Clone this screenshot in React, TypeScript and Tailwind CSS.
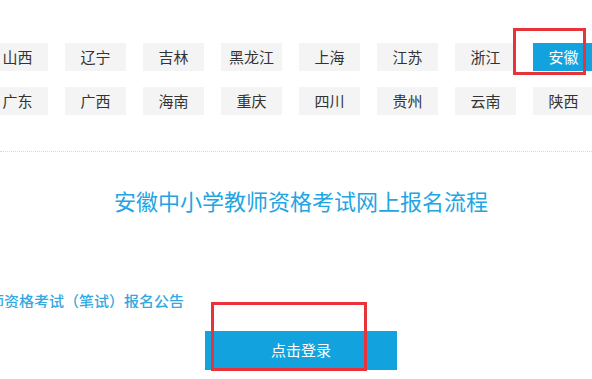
import React from "react";

const ROWS = [
  ["山西", "辽宁", "吉林", "黑龙江", "上海", "江苏", "浙江", "安徽"],
  ["广东", "广西", "海南", "重庆", "四川", "贵州", "云南", "陕西"],
];

const CN = { fontFamily: '"Noto Sans CJK SC", "Noto Sans", sans-serif' };

export default function App() {
  return (
    <div className="relative h-[379px] w-[592px] overflow-hidden bg-white" style={CN}>
      {/* province picker */}
      <div className="overflow-hidden pt-[43px]">
        <div className="-ml-[13px] flex w-[607px] flex-wrap gap-x-[17px] gap-y-[16px]">
          {ROWS.flat().map((name) => {
            const active = name === "安徽";
            return (
              <div
                key={name}
                className={
                  active
                    ? "flex h-[28px] w-[61px] items-center justify-center bg-[#12a3df] text-[15px] text-white"
                    : "flex h-[28px] w-[61px] items-center justify-center bg-[#f4f4f4] text-[15px] text-[#333]"
                }
              >
                {name}
              </div>
            );
          })}
        </div>
      </div>

      <div className="mt-[36px] border-t border-dotted border-[#d9d9d9]" />

      <h1 className="mt-[37px] pl-[10px] text-center text-[22px] leading-[22px] font-normal text-[#22a5e2]">
        安徽中小学教师资格考试网上报名流程
      </h1>

      <div className="mt-[82px] overflow-hidden">
        <p className="-ml-[11px] text-[15px] leading-[15px] font-medium whitespace-nowrap text-[#35a8e1]">
          师资格考试（笔试）报名公告
        </p>
      </div>

      <button className="mt-[23px] ml-[205px] flex h-[39px] w-[192px] items-center justify-center bg-[#12a3df] text-[15px] text-white">
        点击登录
      </button>

      {/* red annotation boxes */}
      <div className="absolute top-[28px] left-[513px] h-[47px] w-[73px] border-[3px] border-[#e8333b]" />
      <div className="absolute top-[302px] left-[211px] h-[69px] w-[156px] border-[3px] border-[#e8333b]" />
    </div>
  );
}
